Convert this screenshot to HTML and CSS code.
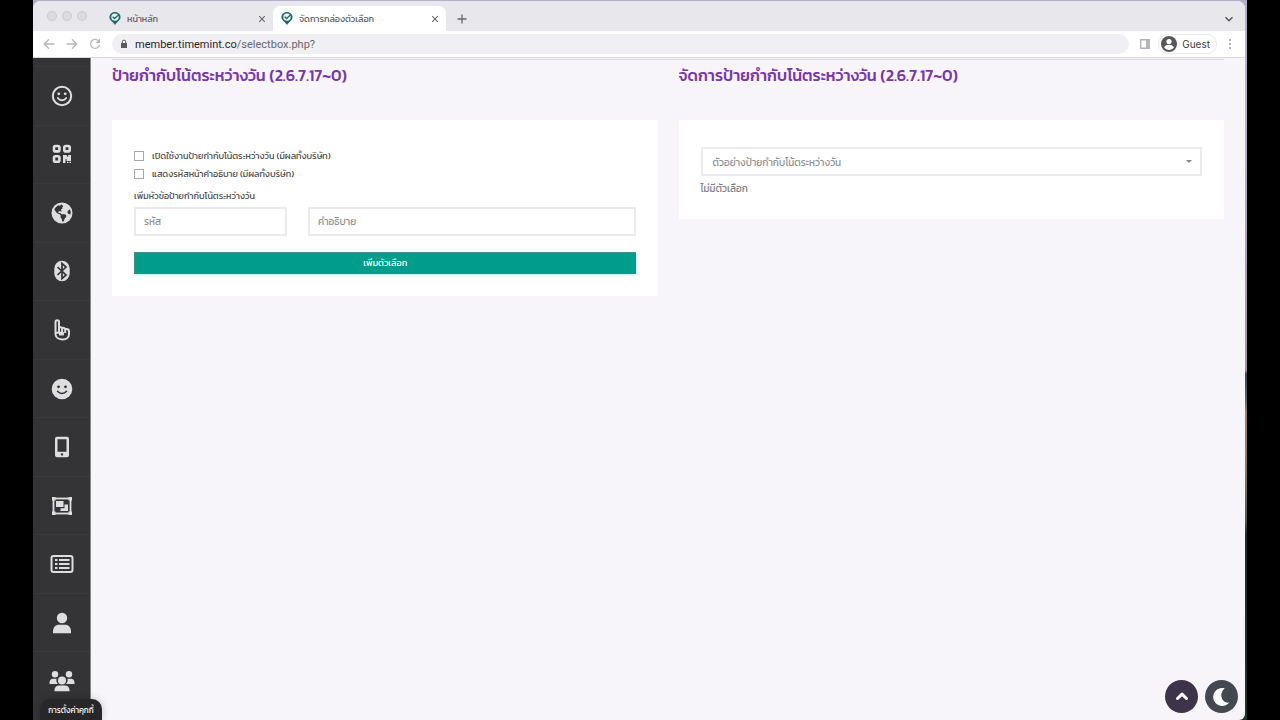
FILE: index.html
```html
<!DOCTYPE html>
<html lang="th">
<head>
<meta charset="utf-8">
<meta name="viewport" content="width=device-width, initial-scale=1">
<title>จัดการกล่องตัวเลือก</title>
<link rel="stylesheet" href="styles.css">
</head>
<body>
<svg class="defs" aria-hidden="true">
  <symbol id="pin" viewBox="0 0 24 28">
    <path fill="#246b6b" d="M12 0C5 0 0 5 0 11c0 7 7 10 12 17 5-7 12-10 12-17C24 5 19 0 12 0z"/>
    <circle cx="12" cy="11" r="8" fill="#e8f1ef"/>
    <path fill="none" stroke="#246b6b" stroke-width="3" d="M7 10l4 4 9-8"/>
  </symbol>
  <symbol id="close" viewBox="0 0 10 10"><path fill="none" stroke="#66676b" stroke-width="1.300" d="M1.500 1.500l7 7m0-7l-7 7"/></symbol>
</svg>
<div class="desktop">
<div class="window">
  <header class="tabs">
    <div class="lights"><i></i><i></i><i></i></div>
    <div class="tab">
      <svg class="favicon"><use href="#pin"/></svg><span>หน้าหลัก</span>
      <button class="x" aria-label="ปิด"><svg><use href="#close"/></svg></button>
    </div>
    <div class="tab active">
      <svg class="favicon"><use href="#pin"/></svg><span>จัดการกล่องตัวเลือก</span>
      <button class="x" aria-label="ปิด"><svg><use href="#close"/></svg></button>
    </div>
    <button class="plus" aria-label="แท็บใหม่"><svg viewBox="0 0 10 10" width="10" height="10"><path fill="none" stroke="#66676b" stroke-width="1.300" d="M5 .5v9M.5 5h9"/></svg></button>
    <button class="more-tabs" aria-label="ค้นหาแท็บ"><svg viewBox="0 0 10 10" width="10" height="10"><path fill="none" stroke="#55565a" stroke-width="1.400" d="M1.500 3.300L5 6.800l3.500-3.500"/></svg></button>
  </header>
  <div class="toolbar">
    <button aria-label="ย้อนกลับ"><svg viewBox="0 0 12 12" width="12" height="12"><path fill="none" stroke="#b8b8bc" stroke-width="1.300" d="M11.500 6H1.500M6 1.200L1.200 6 6 10.800"/></svg></button>
    <button aria-label="ไปข้างหน้า"><svg viewBox="0 0 12 12" width="12" height="12"><path fill="none" stroke="#b8b8bc" stroke-width="1.300" d="M.5 6h10M6 1.200L10.800 6 6 10.800"/></svg></button>
    <button aria-label="โหลดใหม่"><svg viewBox="0 0 12 12" width="12" height="12"><path fill="none" stroke="#b8b8bc" stroke-width="1.300" d="M10 3.500A4.500 4.500 0 1 0 10.500 7"/><path fill="#b8b8bc" d="M11 .5V5H6.500z"/></svg></button>
    <div class="address">
      <svg viewBox="0 0 8 10" width="8" height="10"><path fill="#5a5b60" d="M1 4h6v5H1z"/><path fill="none" stroke="#5a5b60" stroke-width="1" d="M2.300 4.500V2.800a1.700 1.700 0 0 1 3.400 0v1.700"/></svg>
      <span><b>member.timemint.co</b>/selectbox.php?</span>
    </div>
    <svg class="panel" viewBox="0 0 10 10" width="10" height="10"><path fill="none" stroke="#b4b4b8" stroke-width="1.400" d="M.7.7h8.600v8.600H.7z"/><path fill="#b4b4b8" d="M6 1h3.500v8H6z"/></svg>
    <button class="guest">
      <svg viewBox="0 0 16 16" width="16" height="16"><circle cx="8" cy="8" r="8" fill="#55565b"/><circle cx="8" cy="5.500" r="2.600" fill="#fff"/><path fill="#fff" d="M3 11.200c1-1.700 3-2.500 5-2.500s4 .8 5 2.500C11.800 13 10 14 8 14s-3.800-1-5-2.800z"/></svg>
      Guest
    </button>
    <button aria-label="เมนู"><svg viewBox="0 0 4 12" width="4" height="12"><g fill="#97979b"><circle cx="2" cy="2" r="1"/><circle cx="2" cy="6" r="1"/><circle cx="2" cy="10" r="1"/></g></svg></button>
  </div>
  <div class="page">
    <nav class="side">
      <a href="#" aria-label="ใบหน้า"><svg viewBox="0 0 22 22"><circle cx="11" cy="11" r="9.200" fill="none" stroke="#dededf" stroke-width="2"/><circle cx="7.800" cy="8.800" r="1.400"/><circle cx="14.200" cy="8.800" r="1.400"/><path fill="none" stroke="#dededf" stroke-width="1.800" stroke-linecap="round" d="M6.800 13c2 3 6.400 3 8.400 0"/></svg></a>
      <a href="#" aria-label="คิวอาร์โค้ด"><svg viewBox="0 0 22 22"><g fill="none" stroke="#dededf" stroke-width="2.600"><rect x="3" y="3" width="5.400" height="5.400" rx="1.500"/><rect x="13.300" y="3" width="5.400" height="5.400" rx="1.500"/><rect x="3" y="13.300" width="5.400" height="5.400" rx="1.500"/></g><path d="M12 12h3.800v1.500h1.400V12H20v6h-4.500v-2h-1v4H12zM16 18.800h1.500v1.200H16zM18.500 18.800H20v1.200h-1.500z"/></svg></a>
      <a href="#" aria-label="โลก"><svg viewBox="-12 -4 520 520"><circle cx="248" cy="256" r="248"/><path fill="#343436" d="M330 366c-8 8-15 13-18 22-7 25-12 42-22 63-14 3-28 5-42 5v-28c2-13-8-36-23-51-6-6-9-14-9-23v-32c0-12-6-22-16-28-34-19-72-36-100-70-9-14-24-36-34-51 20-45 57-82 103-102l24 12c11 6 23-1 23-13V59c8-1 16-2 24-3l29 29c6 6 6 16 0 22l-15 15c-3 3-3 8 0 12 8 8 7 12 4 16-10 12-18 10-24 13l-10 10c-2 2-3 6-1 9l15 31c3 6-1 12-7 12-8 0-13-5-20-11a16 16 0 0 0-15-3l-31 10c-10 3-11 17-2 22 14 8 26 12 42 13 10 0 22 27 32 32h67c22 0 45 23 45 45 0 12-5 24-19 33zM448 290l-38-10c-20-4-30-24-32-42-2-18 8-35 20-43l38-25c15 27 22 76 12 120z"/></svg></a>
      <a href="#" aria-label="บลูทูธ"><svg viewBox="0 0 22 22"><rect x="3.300" y=".7" width="15.400" height="20.600" rx="7.700"/><path fill="none" stroke="#343436" stroke-width="1.700" d="M6.500 7l8.500 8-4 3.600V3.400L15 7l-8.500 8"/></svg></a>
      <a href="#" aria-label="ชี้"><svg viewBox="0 0 22 22"><path fill="none" stroke="#dededf" stroke-width="2" stroke-linejoin="round" d="M4.500 13V2.800c0-2 3.500-2 3.500 0V9c1-1.300 2.800-1 3.100.2 1.300-.8 2.700-.2 2.900 1 1.800-.6 4 .2 4 1.900v3.200c0 3-2.600 5.200-6.200 5.200-3.600 0-7-1.700-7.300-5zM5 13.800h7v1.800H8M8 9v4m3.100-4v4m3.100-3v4"/></svg></a>
      <a href="#" aria-label="ยิ้ม"><svg viewBox="0 0 22 22"><circle cx="11" cy="11" r="10.300"/><g fill="#343436"><circle cx="7.500" cy="8.800" r="1.400"/><circle cx="14.500" cy="8.800" r="1.400"/></g><path fill="none" stroke="#343436" stroke-width="1.500" stroke-linecap="round" d="M6.500 13.300c2.300 2.900 6.700 2.900 9 0"/></svg></a>
      <a href="#" aria-label="มือถือ"><svg viewBox="0 0 22 22"><path fill-rule="evenodd" d="M6 .8h10a2 2 0 0 1 2 2v16.400a2 2 0 0 1-2 2H6a2 2 0 0 1-2-2V2.800a2 2 0 0 1 2-2zM6.500 3.300v12.500h9V3.300zM11 17.200a1.200 1.200 0 1 0 0 2.400 1.200 1.200 0 0 0 0-2.400z"/></svg></a>
      <a href="#" aria-label="กลุ่มวัตถุ"><svg viewBox="0 0 22 22"><rect x="2.500" y="3.500" width="17" height="15" fill="none" stroke="#dededf" stroke-width="1.800"/><path d="M1 2h3.500v3.500H1zM17.500 2H21v3.500h-3.500zM1 16.500h3.500V20H1zM17.500 16.500H21V20h-3.500zM5 6h7.500v6H5zM13.500 9.500H17V16h-7.500v-2.700h4z"/></svg></a>
      <a href="#" aria-label="รายการ"><svg viewBox="0 0 24 22" class="wide"><rect x="1.500" y="3" width="21" height="16" rx="2" fill="none" stroke="#dededf" stroke-width="2"/><path d="M5 6h2.500v2H5zM5 10h2.500v2H5zM5 14h2.500v2H5zM9 6h10.500v2H9zM9 10h10.500v2H9zM9 14h10.500v2H9z"/></svg></a>
      <a href="#" aria-label="ผู้ใช้"><svg viewBox="0 0 22 22"><circle cx="11" cy="6" r="5.200"/><path d="M2 21.300v-2c0-4 2.500-6.600 6-6.600h6c3.500 0 6 2.600 6 6.600v2z"/></svg></a>
      <a href="#" aria-label="กลุ่มผู้ใช้"><svg viewBox="0 0 26 22" class="group"><circle cx="6" cy="4.200" r="3.200"/><circle cx="20" cy="4.200" r="3.200"/><path d="M.5 14v-1.500C.5 10 2 8.700 4 8.700h3.500c-.5 2 .2 4 1.500 5.300zM25.500 14v-1.500c0-2.500-1.500-3.800-3.500-3.800h-3.500c.5 2-.2 4-1.500 5.300z"/><circle cx="13" cy="10.500" r="4"/><path d="M5.500 21.300v-1c0-3 2-4.800 4.500-4.800h6c2.500 0 4.500 1.800 4.500 4.800v1z"/></svg></a>
    </nav>
    <main class="content">
      <section>
        <h2>ป้ายกำกับโน้ตระหว่างวัน (2.6.7.17~0)</h2>
        <form class="card add">
          <label class="check"><input type="checkbox">เปิดใช้งานป้ายกำกับโน้ตระหว่างวัน (มีผลทั้งบริษัท)</label>
          <label class="check"><input type="checkbox">แสดงรหัสหน้าคำอธิบาย (มีผลทั้งบริษัท)</label>
          <p>เพิ่มหัวข้อป้ายกำกับโน้ตระหว่างวัน</p>
          <div class="fields">
            <input type="text" placeholder="รหัส" aria-label="รหัส">
            <input type="text" placeholder="คำอธิบาย" aria-label="คำอธิบาย">
          </div>
          <button class="submit" type="button">เพิ่มตัวเลือก</button>
        </form>
      </section>
      <section>
        <h2>จัดการป้ายกำกับโน้ตระหว่างวัน (2.6.7.17~0)</h2>
        <div class="card manage">
          <div class="select">
            <select aria-label="ตัวอย่างป้ายกำกับโน้ตระหว่างวัน"><option>ตัวอย่างป้ายกำกับโน้ตระหว่างวัน</option></select>
          </div>
          <p>ไม่มีตัวเลือก</p>
        </div>
      </section>
    </main>
    <button class="cookie">การตั้งค่าคุกกี้</button>
    <div class="floating">
      <button class="top" aria-label="ขึ้นบน"><svg viewBox="0 0 16 16" width="16" height="16"><path fill="none" stroke="#fff" stroke-width="3" stroke-linecap="round" stroke-linejoin="round" d="M3.500 9.500L8 5.200l4.500 4.300"/></svg></button>
      <button class="dark" aria-label="โหมดมืด"><svg viewBox="0 0 20 20" width="20" height="20"><path fill="#fff" d="M10.500 1a9 9 0 1 0 6.800 14.500C9.500 17 6.500 6.500 12.500 1.500c.6-.5-1.200-.6-2-.5z"/></svg></button>
    </div>
  </div>
</div>
</div>
</body>
</html>
```
FILE: styles.css
```css
* { box-sizing: border-box; }
body { margin: 0; background: #000; font-family: Kanit, "Noto Sans Thai", "Noto Sans", "Open Sans", sans-serif; color: #48484c; }
button { border: 0; padding: 0; background: none; font: inherit; display: grid; place-items: center; }
.defs { display: none; }
.desktop {
  min-height: 100vh; margin: 0 33px; padding: 1px 2px 0 0; display: flex;
  background: linear-gradient(#b5aecb 0, #b4b0d0 120px, #a58fa5 370px, #3c4358 374px, #5c6070 400px, #9a8550 412px, #8c7a48 470px, #50594c 520px, #20282a 535px, #252d2e 690px, #1f351c);
}
.window { flex: 1; min-width: 0; display: flex; flex-direction: column; overflow: hidden; border-radius: 8px 8px 6px 0; background: #f7f5f9; }

.tabs { display: flex; align-items: stretch; height: 30px; padding: 5px 11px 0 14px; background: #e8e7ec; }
.lights { display: flex; gap: 5px; width: 54px; padding-top: 5px; }
.lights i { width: 10px; height: 10px; border: 1px solid #cbcacd; border-radius: 50%; background: #dcdbde; }
.tab { display: flex; align-items: center; gap: 6px; width: 172px; padding: 0 6px 0 8px; font-size: 9px; color: #5a5b60; }
.tab.active { width: 173px; border-radius: 7px 7px 0 0; background: #fff; }
.favicon { width: 12px; height: 13px; }
.x { width: 10px; height: 10px; margin-left: auto; }
.x svg { width: 8px; height: 8px; }
.plus { margin-left: 11px; }
.more-tabs { margin-left: auto; }

.toolbar { display: flex; align-items: center; height: 27px; padding: 0 13px 0 10px; gap: 11px; border-bottom: 1px solid #d8d7da; background: #fff; }
.address { flex: 1; display: flex; align-items: center; gap: 7px; height: 20px; padding: 0 8px; border-radius: 10px; background: #f0eff4; font: 11px Roboto, sans-serif; color: #66676c; }
.address b { font-weight: 400; color: #26262a; }
.guest { display: flex; align-items: center; gap: 5px; height: 20px; padding: 0 6px 0 2px; margin-left: -3px; border: 1px solid #e8e7ea; border-radius: 10px; font: 10px Inter, Roboto, sans-serif; color: #3c3c40; }

.page { position: relative; flex: 1; display: flex; }
.side { display: flex; flex-direction: column; width: 58px; padding: 8px 0 10px; border-right: 1px solid #858487; background: #343436; }
.side a { flex: 1; display: grid; place-items: center; border-top: 1px solid #3a3a3c; }
.side svg { width: 22px; height: 22px; fill: #dededf; }
.side .wide { width: 24px; }
.side .group { width: 26px; }
.content { flex: 1; display: grid; grid-template-columns: 1fr 1fr; align-items: start; gap: 21px; margin: 1px 21px 0; border-top: 1px solid #dcdbde; }
h2 { margin: 0; height: 60px; font-size: 16px; line-height: 31px; font-weight: 500; color: #7a35ac; white-space: nowrap; }
.card { background: #fff; padding: 22px; }
.add { padding-top: 27px; font-size: 9px; }
.check { display: flex; align-items: center; gap: 8px; height: 18px; }
.check input { appearance: none; width: 10px; height: 10px; margin: 0; border: 1px solid #aaaaad; background: #fff; }
.add p { margin: 4px 0 2px; line-height: 18px; }
.fields { display: grid; grid-template-columns: 153px 1fr; gap: 21px; }
.fields input, .select select { width: 100%; height: 29px; padding: 0 8px; border: 2px solid #ebeaee; border-radius: 0; background: #fff; font: inherit; font-size: 10px; color: #929296; }
.fields input::placeholder { color: #929296; }
.submit { width: 100%; height: 22px; padding-bottom: 1px; margin-top: 16px; border: 1px solid #4c8c82; border-width: 1px 0 0 1px; background: #009d8c; color: #fff; font-size: 9px; box-shadow: 0 1px 3px #b8efe8; }
.manage { padding-top: 27px; font-size: 10px; color: #808084; }
.manage p { margin: 4px 0 0; line-height: 18px; }
.manage { padding-bottom: 21px; }
.select { position: relative; }
.select select { display: block; appearance: none; padding: 1px 10px 0; }
.select::after { content: ""; position: absolute; right: 10px; top: 13px; border: 3px solid transparent; border-top: 3px solid #88888c; pointer-events: none; }

.cookie { position: absolute; left: 7px; bottom: 0; width: 62px; height: 21px; border-radius: 10px 10px 0 0; background: #27272a; color: #fff; font-size: 8px; box-shadow: 0 0 8px #0003; white-space: nowrap; }
.floating { position: absolute; right: 7px; bottom: 7px; display: flex; gap: 7px; }
.floating button { width: 33px; height: 33px; border-radius: 50%; }
.top { background: #3d344b; }
.dark { background: #444852; }
```
